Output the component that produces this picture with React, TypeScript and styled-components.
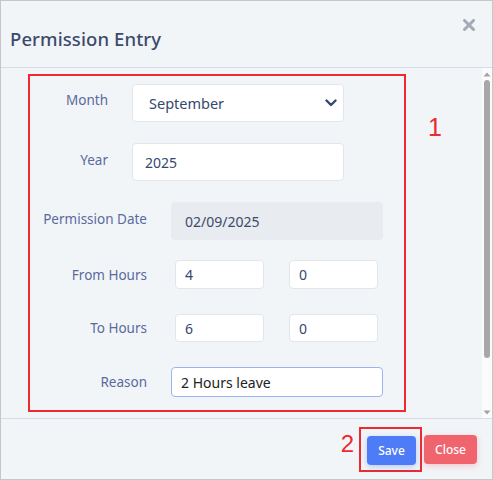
import { FC, useEffect, useRef } from "react";
import styled, { createGlobalStyle } from "styled-components";

const GlobalStyle = createGlobalStyle`
html, body {
    margin:0;
    padding:0;
    background:#ffffff;
}
* {
    box-sizing:border-box;
}
`

type RowProps = {
    $top: number
}

type LabelProps = {
    $width: number
    $lift?: number
}

type FieldProps = {
    $width: number
    $height: number
    $pad: number
}

const App: FC = () => {
    const reasonRef = useRef<HTMLInputElement>(null)

    useEffect(() => {
        const el = reasonRef.current
        if (el) {
            el.focus()
            el.setSelectionRange(el.value.length, el.value.length)
        }
    }, [])

    return (
        <>
            <GlobalStyle />
            <Window>
                <Header>
                    <Title>Permission Entry</Title>
                    <CloseIcon aria-label="close">
                        <svg width="12" height="12" viewBox="0 0 12 12">
                            <path d="M1.5 1.5 L10.5 10.5 M10.5 1.5 L1.5 10.5" stroke="#a4a9b5" strokeWidth="3" strokeLinecap="round" />
                        </svg>
                    </CloseIcon>
                </Header>
                <Body>
                    <BodyContent>
                        <FormBox>
                            <Row $top={8}>
                                <Label $width={78} $lift={6}>Month</Label>
                                <SelectWrap>
                                    <Select defaultValue="September">
                                        <option>January</option>
                                        <option>February</option>
                                        <option>March</option>
                                        <option>April</option>
                                        <option>May</option>
                                        <option>June</option>
                                        <option>July</option>
                                        <option>August</option>
                                        <option>September</option>
                                        <option>October</option>
                                        <option>November</option>
                                        <option>December</option>
                                    </Select>
                                    <Chevron width="12" height="8" viewBox="0 0 12 8">
                                        <path d="M1.5 1.5 L6 6 L10.5 1.5" stroke="#34486e" strokeWidth="2.4" fill="none" strokeLinecap="round" strokeLinejoin="round" />
                                    </Chevron>
                                </SelectWrap>
                            </Row>
                            <Row $top={21}>
                                <Label $width={78} $lift={4}>Year</Label>
                                <Field $width={212} $height={38} $pad={12} defaultValue="2025" />
                            </Row>
                            <Row $top={21}>
                                <Label $width={117} $lift={4}>Permission Date</Label>
                                <DisabledField $width={212} $height={38} $pad={13} value="02/09/2025" readOnly />
                            </Row>
                            <Row $top={20}>
                                <Label $width={117}>From Hours</Label>
                                <HourPair>
                                    <Field $width={89} $height={29} $pad={9} defaultValue="4" />
                                    <Field $width={89} $height={29} $pad={9} defaultValue="0" />
                                </HourPair>
                            </Row>
                            <Row $top={25}>
                                <Label $width={117}>To Hours</Label>
                                <HourPair>
                                    <Field $width={89} $height={28} $pad={9} defaultValue="6" />
                                    <Field $width={89} $height={28} $pad={9} defaultValue="0" />
                                </HourPair>
                            </Row>
                            <Row $top={25}>
                                <Label $width={117}>Reason</Label>
                                <FocusField ref={reasonRef} $width={212} $height={30} $pad={9} defaultValue="2 Hours leave" />
                            </Row>
                        </FormBox>
                        <Marker>1</Marker>
                    </BodyContent>
                    <ScrollTrack>
                        <ScrollArrow>
                            <svg width="8" height="5" viewBox="0 0 8 5">
                                <path d="M0.5 4.5 L4 0.5 L7.5 4.5 Z" fill="#a3a3a3" />
                            </svg>
                        </ScrollArrow>
                        <ThumbArea>
                            <Thumb />
                        </ThumbArea>
                        <ScrollArrow>
                            <svg width="8" height="5" viewBox="0 0 8 5">
                                <path d="M0.5 0.5 L4 4.5 L7.5 0.5 Z" fill="#a3a3a3" />
                            </svg>
                        </ScrollArrow>
                    </ScrollTrack>
                </Body>
                <Footer>
                    <Marker2>2</Marker2>
                    <Highlight>
                        <SaveButton type="button">Save</SaveButton>
                    </Highlight>
                    <CloseButton type="button">Close</CloseButton>
                </Footer>
            </Window>
        </>
    )
}

export default App

const Window = styled.div`
width:493px;
height:480px;
border:1px solid #c7c7c7;
background-color:#f1f5f8;
display:flex;
flex-direction:column;
font-family:"Noto Sans", "Open Sans", sans-serif;
`

const Header = styled.div`
display:flex;
justify-content:space-between;
align-items:flex-start;
height:67px;
flex-shrink:0;
padding:0 17px 0 9px;
border-bottom:1px solid #d6dde8;
`

const Title = styled.h4`
margin:26px 0 0;
font-size:18.5px;
font-weight:500;
color:#3d4a6c;
letter-spacing:0.1px;
line-height:24px;
`

const CloseIcon = styled.span`
display:block;
margin-top:18px;
width:12px;
height:12px;
cursor:pointer;
svg {
    display:block;
}
`

const Body = styled.div`
height:350px;
flex-shrink:0;
display:flex;
overflow:hidden;
`

const BodyContent = styled.div`
flex:1;
display:flex;
align-items:flex-start;
padding:6px 0 0 27px;
`

const ScrollTrack = styled.div`
width:10px;
flex-shrink:0;
display:flex;
flex-direction:column;
align-items:center;
background-color:#fbfbfb;
`

const ScrollArrow = styled.div`
height:12px;
display:flex;
align-items:center;
justify-content:center;
svg {
    display:block;
}
`

const ThumbArea = styled.div`
flex:1;
display:flex;
flex-direction:column;
`

const Thumb = styled.div`
width:6px;
height:278px;
border-radius:3px;
background-color:#a8a8a8;
`

const FormBox = styled.div`
width:378px;
height:338px;
border:2px solid #ec2a2f;
display:flex;
flex-direction:column;
`

const Marker = styled.div`
margin:38px 0 0 22px;
font-size:25px;
line-height:30px;
color:#ec2a2f;
font-family:"Liberation Sans", Arial, sans-serif;
`

const Row = styled.div<RowProps>`
display:flex;
align-items:center;
margin-top:${props => props.$top}px;
`

const Label = styled.label<LabelProps>`
width:${props => props.$width}px;
flex-shrink:0;
text-align:right;
margin-right:24px;
font-size:13.5px;
color:#5a6a9d;
padding-bottom:${props => props.$lift ?? 0}px;
white-space:nowrap;
`

const SelectWrap = styled.div`
position:relative;
width:212px;
height:38px;
`

const Select = styled.select`
appearance:none;
width:100%;
height:100%;
padding:0 0 0 16px;
border:1px solid #e1e6ee;
border-radius:4px;
background-color:#ffffff;
font-family:inherit;
font-size:14.5px;
color:#34486e;
outline:none;
`

const Chevron = styled.svg`
position:absolute;
right:7px;
top:15px;
pointer-events:none;
`

const Field = styled.input<FieldProps>`
width:${props => props.$width}px;
height:${props => props.$height}px;
padding:0 0 0 ${props => props.$pad}px;
border:1px solid #e1e6ee;
border-radius:4px;
background-color:#ffffff;
font-family:inherit;
font-size:14px;
color:#34486e;
outline:none;
`

const DisabledField = styled(Field)`
background-color:#e8ebef;
border-color:#e8ebef;
color:#3d4a6c;
`

const FocusField = styled(Field)`
border-color:#9cb4f6;
color:#222222;
caret-color:#111111;
`

const HourPair = styled.div`
display:flex;
gap:25px;
margin-left:4px;
`

const Footer = styled.div`
flex:1;
display:flex;
justify-content:flex-end;
align-items:center;
gap:2px;
padding-right:15px;
border-top:1px solid #d6dde8;
`

const Marker2 = styled.div`
font-size:24px;
line-height:28px;
color:#ec2a2f;
font-family:"Liberation Sans", Arial, sans-serif;
margin-right:3px;
margin-bottom:10px;
`

const Highlight = styled.div`
border:2px solid #ec2a2f;
padding:7px 4px 5px 6px;
display:flex;
`

const BaseButton = styled.button`
height:29px;
border:0;
border-radius:4px;
color:#ffffff;
font-family:inherit;
font-size:12px;
font-weight:500;
cursor:pointer;
padding:0;
`

const SaveButton = styled(BaseButton)`
width:49px;
background-color:#4d7cf6;
box-shadow:0 2px 6px rgba(77, 124, 246, 0.35);
`

const CloseButton = styled(BaseButton)`
width:53px;
background-color:#f0646e;
box-shadow:0 2px 6px rgba(240, 100, 110, 0.3);
`
